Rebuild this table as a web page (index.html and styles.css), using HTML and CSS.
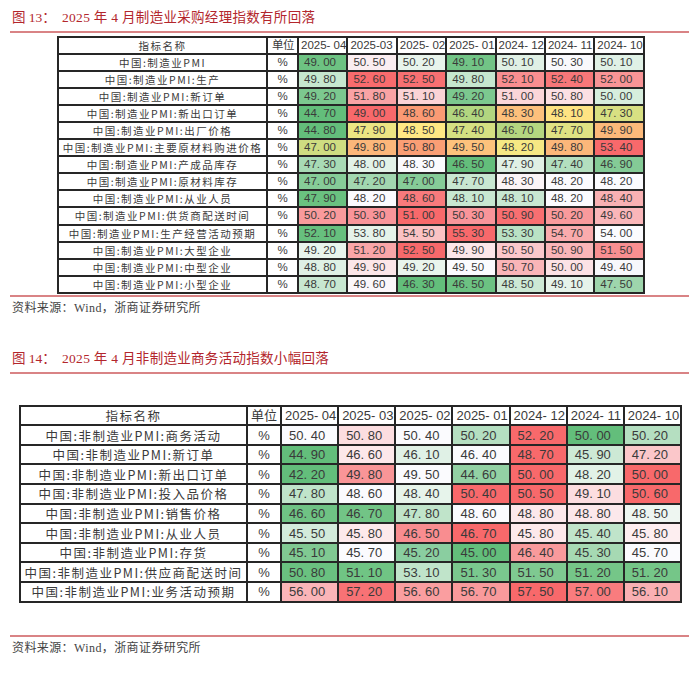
FILE: index.html
```html
<!DOCTYPE html>
<html lang="zh-CN">
<head>
<meta charset="utf-8">
<title>PMI</title>
<link rel="stylesheet" href="styles.css">
</head>
<body>
<section class="fig fig13">
  <h2 class="fig-title"><span class="fig-no">图 13：</span><span class="fig-text">2025 年 4 月制造业采购经理指数有所回落</span></h2>
  <table class="heat t1">
    <colgroup><col class="c-name"><col class="c-unit"><col class="c-val"><col class="c-val"><col class="c-val"><col class="c-val"><col class="c-val"><col class="c-val"><col class="c-val"></colgroup>
    <thead>
      <tr><th class="name">指标名称</th><th class="unit">单位</th><th>2025- 04</th><th>2025-03</th><th>2025- 02</th><th>2025- 01</th><th>2024- 12</th><th>2024- 11</th><th>2024- 10</th></tr>
    </thead>
    <tbody>
      <tr><td class="name">中国:制造业PMI</td><td class="unit">%</td><td style="background:#6dc282">49. 00</td><td style="background:#fbeef1">50. 50</td><td style="background:#e8f4ec">50. 20</td><td style="background:#72c486">49. 10</td><td style="background:#e0f0e5">50. 10</td><td style="background:#f9f9fc">50. 30</td><td style="background:#e0f1e6">50. 10</td></tr>
      <tr><td class="name">中国:制造业PMI:生产</td><td class="unit">%</td><td style="background:#c6e7cf">49. 80</td><td style="background:#f86b6d">52. 60</td><td style="background:#f87072">52. 50</td><td style="background:#c6e7cf">49. 80</td><td style="background:#f98e90">52. 10</td><td style="background:#f87779">52. 40</td><td style="background:#f99496">52. 00</td></tr>
      <tr><td class="name">中国:制造业PMI:新订单</td><td class="unit">%</td><td style="background:#7cc88f">49. 20</td><td style="background:#f9a3a5">51. 80</td><td style="background:#fbd3d6">51. 10</td><td style="background:#7cc88f">49. 20</td><td style="background:#fbd6d9">51. 00</td><td style="background:#fce0e3">50. 80</td><td style="background:#d7eedd">50. 00</td></tr>
      <tr><td class="name">中国:制造业PMI:新出口订单</td><td class="unit">%</td><td style="background:#63be7b">44. 70</td><td style="background:#f8696b">49. 00</td><td style="background:#fb9a74">48. 60</td><td style="background:#b2d680">46. 40</td><td style="background:#fdc07c">48. 30</td><td style="background:#ffe383">48. 10</td><td style="background:#d8e082">47. 30</td></tr>
      <tr><td class="name">中国:制造业PMI:出厂价格</td><td class="unit">%</td><td style="background:#63be7b">44. 80</td><td style="background:#ece583">47. 90</td><td style="background:#ffe884">48. 50</td><td style="background:#d5e082">47. 40</td><td style="background:#b5d680">46. 70</td><td style="background:#e0e283">47. 70</td><td style="background:#fcb97a">49. 90</td></tr>
      <tr><td class="name">中国:制造业PMI:主要原材料购进价格</td><td class="unit">%</td><td style="background:#cfdd81">47. 00</td><td style="background:#fcb77a">49. 80</td><td style="background:#fa9e75">50. 80</td><td style="background:#fdc27c">49. 50</td><td style="background:#f6e884">48. 20</td><td style="background:#fcb77a">49. 80</td><td style="background:#f8696b">53. 40</td></tr>
      <tr><td class="name">中国:制造业PMI:产成品库存</td><td class="unit">%</td><td style="background:#a8dab5">47. 30</td><td style="background:#e3f2e8">48. 00</td><td style="background:#fbfbfe">48. 30</td><td style="background:#63be7b">46. 50</td><td style="background:#e0f0e5">47. 90</td><td style="background:#b3dfbf">47. 40</td><td style="background:#84cb96">46. 90</td></tr>
      <tr><td class="name">中国:制造业PMI:原材料库存</td><td class="unit">%</td><td style="background:#86cc98">47. 00</td><td style="background:#a2d7b0">47. 20</td><td style="background:#86cc98">47. 00</td><td style="background:#c8e7d1">47. 70</td><td style="background:#fbf4f7">48. 30</td><td style="background:#fbfbfe">48. 20</td><td style="background:#fbfbfe">48. 20</td></tr>
      <tr><td class="name">中国:制造业PMI:从业人员</td><td class="unit">%</td><td style="background:#6ac180">47. 90</td><td style="background:#fbfbfe">48. 20</td><td style="background:#f87a7c">48. 60</td><td style="background:#c8e7d1">48. 10</td><td style="background:#c8e7d1">48. 10</td><td style="background:#fbfbfe">48. 20</td><td style="background:#f9b1b3">48. 40</td></tr>
      <tr><td class="name">中国:制造业PMI:供货商配送时间</td><td class="unit">%</td><td style="background:#f99a9c">50. 20</td><td style="background:#f9959a">50. 30</td><td style="background:#f8696b">51. 00</td><td style="background:#f9959a">50. 30</td><td style="background:#f86f71">50. 90</td><td style="background:#f99a9c">50. 20</td><td style="background:#fab6b9">49. 60</td></tr>
      <tr><td class="name">中国:制造业PMI:生产经营活动预期</td><td class="unit">%</td><td style="background:#67c07e">52. 10</td><td style="background:#e6f3ea">53. 80</td><td style="background:#fbc2c4">54. 50</td><td style="background:#f8696b">55. 30</td><td style="background:#bae2c5">53. 30</td><td style="background:#faabad">54. 70</td><td style="background:#fbfbfe">54. 00</td></tr>
      <tr><td class="name">中国:制造业PMI:大型企业</td><td class="unit">%</td><td style="background:#e9f5ed">49. 20</td><td style="background:#faa6a8">51. 20</td><td style="background:#f8696b">52. 50</td><td style="background:#fce6e9">49. 90</td><td style="background:#fbc8cb">50. 50</td><td style="background:#fab5b8">50. 90</td><td style="background:#f98f91">51. 50</td></tr>
      <tr><td class="name">中国:制造业PMI:中型企业</td><td class="unit">%</td><td style="background:#dff0e5">48. 80</td><td style="background:#fce6e9">49. 90</td><td style="background:#e9f5ed">49. 20</td><td style="background:#fbfbfe">49. 50</td><td style="background:#fab5b8">50. 70</td><td style="background:#fce2e5">50. 00</td><td style="background:#f7f8fb">49. 40</td></tr>
      <tr><td class="name">中国:制造业PMI:小型企业</td><td class="unit">%</td><td style="background:#c8e7d1">48. 70</td><td style="background:#fbf7fa">49. 60</td><td style="background:#63be7b">46. 30</td><td style="background:#6cc282">46. 50</td><td style="background:#cde9d5">48. 50</td><td style="background:#e6f3ea">49. 10</td><td style="background:#9ed5ac">47. 50</td></tr>
    </tbody>
  </table>
  <p class="source">资料来源：Wind，浙商证券研究所</p>
</section>

<section class="fig fig14">
  <h2 class="fig-title"><span class="fig-no">图 14：</span><span class="fig-text">2025 年 4 月非制造业商务活动指数小幅回落</span></h2>
  <table class="heat t2">
    <colgroup><col class="c-name"><col class="c-unit"><col class="c-val"><col class="c-val"><col class="c-val"><col class="c-val"><col class="c-val"><col class="c-val"><col class="c-val"></colgroup>
    <thead>
      <tr><th class="name">指标名称</th><th class="unit">单位</th><th>2025- 04</th><th>2025- 03</th><th>2025- 02</th><th>2025- 01</th><th>2024- 12</th><th>2024- 11</th><th>2024- 10</th></tr>
    </thead>
    <tbody>
      <tr><td class="name">中国:非制造业PMI:商务活动</td><td class="unit">%</td><td style="background:#fbfbfe">50. 40</td><td style="background:#fcdde0">50. 80</td><td style="background:#fbfbfe">50. 40</td><td style="background:#b5dfc1">50. 20</td><td style="background:#f8696b">52. 20</td><td style="background:#63be7b">50. 00</td><td style="background:#b5dfc1">50. 20</td></tr>
      <tr><td class="name">中国:非制造业PMI:新订单</td><td class="unit">%</td><td style="background:#63be7b">44. 90</td><td style="background:#fde8ea">46. 60</td><td style="background:#e0f1e6">46. 10</td><td style="background:#fbfbfe">46. 40</td><td style="background:#f8696b">48. 70</td><td style="background:#cde9d5">45. 90</td><td style="background:#fbc7ca">47. 20</td></tr>
      <tr><td class="name">中国:非制造业PMI:新出口订单</td><td class="unit">%</td><td style="background:#63be7b">42. 20</td><td style="background:#f99597">49. 80</td><td style="background:#fbfbfe">49. 50</td><td style="background:#93d1a4">44. 60</td><td style="background:#f8696b">50. 00</td><td style="background:#e2f2e7">48. 20</td><td style="background:#f8696b">50. 00</td></tr>
      <tr><td class="name">中国:非制造业PMI:投入品价格</td><td class="unit">%</td><td style="background:#c0e4ca">47. 80</td><td style="background:#fbfbfe">48. 60</td><td style="background:#e7f4eb">48. 40</td><td style="background:#f8696b">50. 40</td><td style="background:#f8696b">50. 50</td><td style="background:#fcdde0">49. 10</td><td style="background:#f8696b">50. 60</td></tr>
      <tr><td class="name">中国:非制造业PMI:销售价格</td><td class="unit">%</td><td style="background:#6fc384">46. 60</td><td style="background:#72c486">46. 70</td><td style="background:#c0e4ca">47. 80</td><td style="background:#fbfbfe">48. 60</td><td style="background:#fce8eb">48. 80</td><td style="background:#fce8eb">48. 80</td><td style="background:#eef6f1">48. 50</td></tr>
      <tr><td class="name">中国:非制造业PMI:从业人员</td><td class="unit">%</td><td style="background:#d3ebdb">45. 50</td><td style="background:#fde9eb">45. 80</td><td style="background:#f98d90">46. 50</td><td style="background:#f8696b">46. 70</td><td style="background:#fde9eb">45. 80</td><td style="background:#c0e4ca">45. 40</td><td style="background:#fdeef0">45. 80</td></tr>
      <tr><td class="name">中国:非制造业PMI:存货</td><td class="unit">%</td><td style="background:#80c992">45. 10</td><td style="background:#fbfbfe">45. 70</td><td style="background:#8acea0">45. 20</td><td style="background:#63be7b">45. 00</td><td style="background:#f99a9c">46. 40</td><td style="background:#a6d9b3">45. 30</td><td style="background:#fbfbfe">45. 70</td></tr>
      <tr><td class="name">中国:非制造业PMI:供应商配送时间</td><td class="unit">%</td><td style="background:#6ac180">50. 80</td><td style="background:#70c484">51. 10</td><td style="background:#c0e4ca">53. 10</td><td style="background:#7ac88e">51. 30</td><td style="background:#7fc991">51. 50</td><td style="background:#75c688">51. 20</td><td style="background:#75c688">51. 20</td></tr>
      <tr><td class="name">中国:非制造业PMI:业务活动预期</td><td class="unit">%</td><td style="background:#fbb5b8">56. 00</td><td style="background:#f87275">57. 20</td><td style="background:#fa9ea0">56. 60</td><td style="background:#f99a9c">56. 70</td><td style="background:#f8696b">57. 50</td><td style="background:#f97c7e">57. 00</td><td style="background:#fab0b3">56. 10</td></tr>
    </tbody>
  </table>
  <p class="source">资料来源：Wind，浙商证券研究所</p>
</section>
</body>
</html>
```

FILE: styles.css
```css
* { box-sizing: border-box; }
html, body { margin: 0; padding: 0; background: #ffffff; }
body {
  width: 700px;
  font-family: "Liberation Serif", "Noto Sans CJK SC", serif;
  color: #333333;
}

.fig-title {
  margin: 0 11px 0 10px;
  padding: 9px 0 4px 2px;
  border-bottom: 2px solid #d98385;
  font-family: "Liberation Serif", "Noto Sans CJK SC", serif;
  font-size: 13.5px;
  line-height: 18px;
  font-weight: normal;
  color: #b3262c;
  display: flex;
}
.fig-no { width: 50px; flex: none; }
.fig-text { letter-spacing: 0.3px; }

.heat {
  border-collapse: collapse;
  table-layout: fixed;
}
.heat th, .heat td {
  border: 2px solid #262626;
  padding: 0;
  white-space: nowrap;
  overflow: hidden;
  color: #3a3a3a;
  font-family: "Liberation Sans", "Noto Sans CJK SC", sans-serif;
  font-weight: normal;
  text-align: left;
}
.heat .name, .heat .unit { text-align: center; font-family: "Noto Sans CJK SC", sans-serif; background: #ffffff; }
.heat thead th { background: #ffffff; }

/* Figure 13 table */
.t1 { margin: 3px 0 0 57px; width: 586px; }
.t1 .c-name { width: 209px; }
.t1 .c-unit { width: 31px; }
.t1 .c-val { width: 49.4px; }
.t1 tr { height: 17.05px; }
.t1 th, .t1 td { font-size: 11.5px; line-height: 13px; padding-left: 5px; }
.t1 th { padding-left: 2px; }
.t1 .name { font-size: 10.5px; letter-spacing: 1.5px; padding: 0; }
.t1 .unit { font-size: 11.5px; padding: 0; font-family: "Liberation Sans", sans-serif; }

/* Figure 14 table */
.t2 { margin: 31px 0 0 19px; width: 661px; }
.t2 .c-name { width: 227px; }
.t2 .c-unit { width: 34px; }
.t2 .c-val { width: 57.15px; }
.t2 tr { height: 19.6px; }
.t2 th, .t2 td { font-size: 13px; line-height: 15px; padding-left: 7px; }
.t2 th { padding-left: 3px; }
.t2 .name { font-size: 12.5px; letter-spacing: 1.5px; padding: 0; }
.t2 .unit { font-size: 13px; padding: 0; font-family: "Liberation Sans", sans-serif; }

.source {
  margin: 1px 11px 0 10px;
  padding: 3px 0 0 2px;
  border-top: 2px solid #d98385;
  font-family: "Liberation Serif", "Noto Sans CJK SC", serif;
  font-size: 12px;
  line-height: 16px;
  color: #444444;
  letter-spacing: 0.4px;
}
.fig13 { padding-bottom: 25px; }
.fig14 .source { margin-top: 32px; }
```
